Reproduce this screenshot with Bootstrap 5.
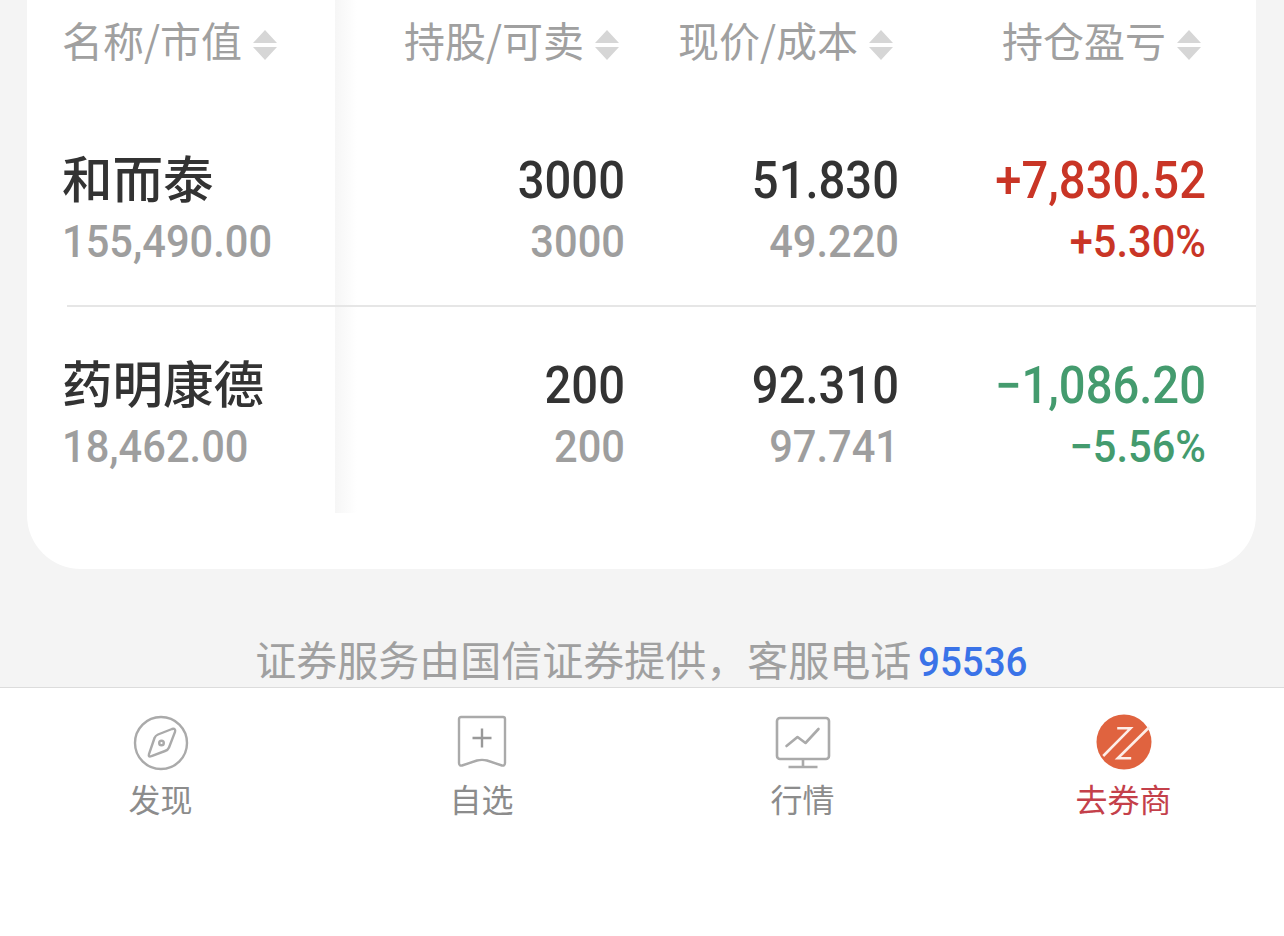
<!DOCTYPE html>
<html lang="zh-CN">
<head>
    <meta charset="UTF-8">
    <meta name="viewport" content="width=device-width, initial-scale=1.0">
    <title>持仓</title>
    <link href="https://cdn.jsdelivr.net/npm/bootstrap@5.3.0/dist/css/bootstrap.min.css" rel="stylesheet">
    <style>
        body {
            background: #f4f4f4;
            font-family: Roboto, "Noto Sans CJK SC", sans-serif;
            height: 936px;
            overflow: hidden;
        }
        .page-main {
            height: 687px;
            overflow: hidden;
        }
        .hold-card {
            margin: 0 28px 0 27px;
            height: 569px;
            background: #fff;
            border-radius: 0 0 54px 54px;
            position: relative;
        }
        .col-shade {
            position: absolute;
            left: 308px;
            top: 0;
            width: 22px;
            height: 513px;
            background: linear-gradient(to right, #f6f6f6, #fff);
        }
        .hold-row {
            display: grid;
            grid-template-columns: 273px 290px 274px 307px;
            margin-left: 35px;
        }
        .head-row {
            height: 101px;
            padding-top: 14px;
            color: #a0a0a0;
            font: 400 41px/50px "Noto Sans CJK SC", sans-serif;
            white-space: nowrap;
        }
        .sort-icon {
            width: 24px;
            height: 30px;
            margin-left: 11px;
            margin-right: 6px;
            vertical-align: -3px;
        }
        .head-row > div:last-child .sort-icon { margin-right: 5px; }
        .data-row {
            height: 205px;
            padding-top: 49px;
            position: relative;
        }
        .data-row.has-line::after {
            content: "";
            position: absolute;
            left: 5px;
            right: 0;
            bottom: -1px;
            height: 2px;
            background: #e6e6e6;
        }
        .line-a, .line-b {
            font-weight: 500;
            white-space: nowrap;
            transform: scaleX(.925);
            transform-origin: right center;
        }
        .line-a {
            height: 60px;
            font-size: 51px;
            line-height: 62px;
            color: #333;
        }
        .line-b {
            height: 64px;
            font-size: 45px;
            line-height: 64px;
            color: #9e9e9e;
        }
        .name-cell .line-b { transform-origin: left center; }
        .stock-name {
            font: 500 50.5px/52px "Noto Sans CJK SC", sans-serif;
            transform: none;
        }
        .txt-up .line-a, .txt-up .line-b { color: #c93526; }
        .txt-down .line-a, .txt-down .line-b { color: #449b6e; }
        .service-note {
            margin-top: 64px;
            text-align: center;
            color: #a0a0a0;
            font: 400 41px/50px "Noto Sans CJK SC", sans-serif;
            white-space: nowrap;
        }
        .service-note a {
            display: inline-block;
            margin-left: 7px;
            margin-right: -6px;
            color: #3a73e8;
            text-decoration: none;
            font: 500 41px/50px Roboto, sans-serif;
            transform: scaleX(.94);
            transform-origin: left center;
        }
        .tab-bar {
            height: 249px;
            background: #fff;
            border-top: 1px solid #dcdcdc;
        }
        .tab-item {
            width: 321px;
            padding-top: 25px;
            text-align: center;
            color: #8c8c8c;
            font: 400 32px/42px "Noto Sans CJK SC", sans-serif;
        }
        .tab-item svg {
            display: block;
            margin: 0 auto 4px;
            width: 60px;
            height: 60px;
        }
        .tab-item.tab-active { color: #c4404a; }
    </style>
</head>
<body>
    <div class="page-main">
        <div class="hold-card">
            <div class="col-shade"></div>

            <div class="hold-row head-row">
                <div>名称/市值<svg class="sort-icon" viewBox="0 0 24 30"><path d="M12 0l12 13H0zM12 30L0 17h24z" fill="#d6d6d6"/></svg></div>
                <div class="text-end">持股/可卖<svg class="sort-icon" viewBox="0 0 24 30"><path d="M12 0l12 13H0zM12 30L0 17h24z" fill="#d6d6d6"/></svg></div>
                <div class="text-end">现价/成本<svg class="sort-icon" viewBox="0 0 24 30"><path d="M12 0l12 13H0zM12 30L0 17h24z" fill="#d6d6d6"/></svg></div>
                <div class="text-end">持仓盈亏<svg class="sort-icon" viewBox="0 0 24 30"><path d="M12 0l12 13H0zM12 30L0 17h24z" fill="#d6d6d6"/></svg></div>
            </div>

            <div class="hold-row data-row has-line">
                <div class="name-cell"><div class="line-a stock-name">和而泰</div><div class="line-b">155,490.00</div></div>
                <div class="text-end"><div class="line-a">3000</div><div class="line-b">3000</div></div>
                <div class="text-end"><div class="line-a">51.830</div><div class="line-b">49.220</div></div>
                <div class="text-end txt-up"><div class="line-a">+7,830.52</div><div class="line-b">+5.30%</div></div>
            </div>

            <div class="hold-row data-row">
                <div class="name-cell"><div class="line-a stock-name">药明康德</div><div class="line-b">18,462.00</div></div>
                <div class="text-end"><div class="line-a">200</div><div class="line-b">200</div></div>
                <div class="text-end"><div class="line-a">92.310</div><div class="line-b">97.741</div></div>
                <div class="text-end txt-down"><div class="line-a">−1,086.20</div><div class="line-b">−5.56%</div></div>
            </div>
        </div>

        <div class="service-note">证券服务由国信证券提供，客服电话<a href="#">95536</a></div>
    </div>

    <nav class="tab-bar d-flex">
        <div class="tab-item">
            <svg viewBox="0 0 60 60" fill="none" stroke="#aaa" stroke-width="2.4">
                <circle cx="30" cy="30" r="26"/>
                <path d="M41 16L27 21.500Q24.500 22.500 23.500 25L18 41Q17 44.500 20.500 43L34 38Q37 37 38 34.500L44 19Q45 15 41 16z"/>
                <circle cx="30.500" cy="30" r="2.300"/>
            </svg>
            发现
        </div>
        <div class="tab-item">
            <svg viewBox="0 0 60 60" fill="none" stroke="#aaa" stroke-width="2.4">
                <path d="M7 6a2 2 0 0 1 2-2h42a2 2 0 0 1 2 2v44c0 2-1.500 3-3 2.500L35 47.500c-3-.7-7-.7-10 0L10 52.500c-1.500.5-3-.5-3-2.500z"/>
                <path d="M30 15.500v19M20.500 25h19" stroke="#999"/>
            </svg>
            自选
        </div>
        <div class="tab-item">
            <svg viewBox="0 0 60 60" fill="none" stroke="#aaa" stroke-width="2.600">
                <rect x="4" y="5" width="52" height="41" rx="3"/>
                <path d="M13.500 33l11-9 8 6 13-14" stroke-linecap="round" stroke-linejoin="round"/>
                <path d="M30 46v8M15.500 54h29"/>
            </svg>
            行情
        </div>
        <div class="tab-item tab-active">
            <svg viewBox="0 0 60 60" fill="none">
                <circle cx="30" cy="29" r="27.500" fill="#e0633f"/>
                <path d="M23.200 15.300H36.500L9.200 43M55.200 14.300L23.800 45.300H37.200" stroke="#fdeee8" stroke-width="2.600"/>
            </svg>
            去券商
        </div>
    </nav>

    <script src="https://cdn.jsdelivr.net/npm/bootstrap@5.3.0/dist/js/bootstrap.bundle.min.js"></script>
</body>
</html>
